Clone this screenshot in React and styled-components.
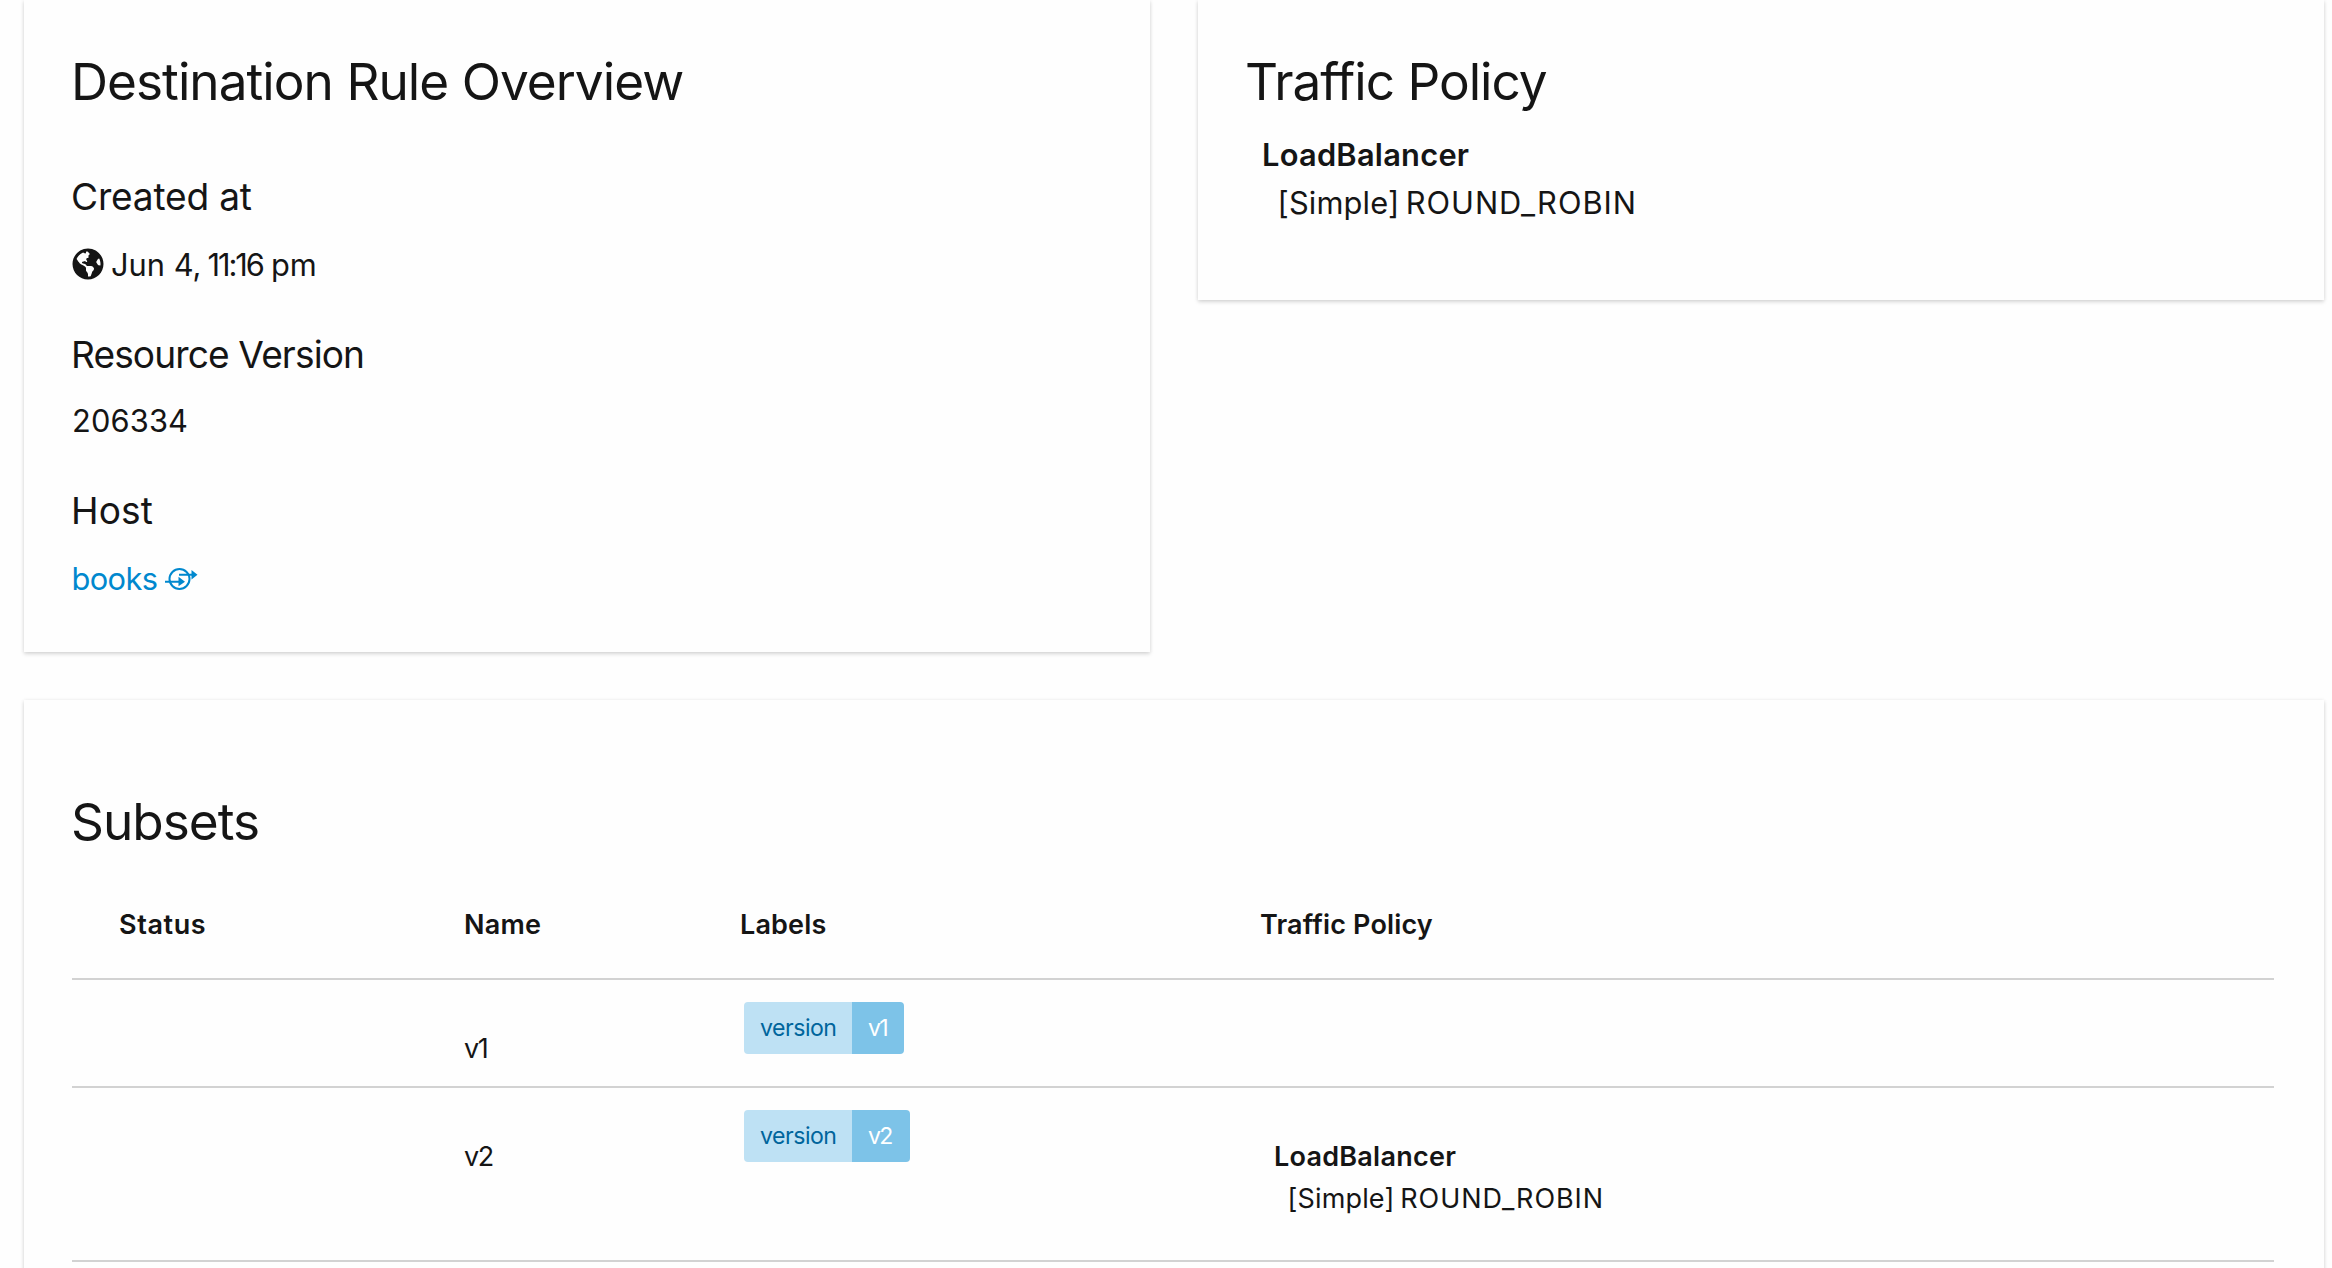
import React from 'react';
import styled, { createGlobalStyle } from 'styled-components';
import { FaGlobeAmericas } from 'react-icons/fa';

const GlobalStyle = createGlobalStyle`
  * { box-sizing: border-box; }
  body {
    margin: 0;
    overflow: hidden;
    background: #fefefe;
    color: #151515;
    font-family: Inter, 'Open Sans', sans-serif;
    font-kerning: normal;
  }
  h1, h3 { margin: 0; font-weight: 400; }
`;

const Page = styled.main`
  display: flex;
  flex-direction: column;
  gap: 48px;
  width: 2332px;
  height: 1268px;
  padding: 0 8px 0 24px;
  overflow: hidden;
`;

const TopRow = styled.div`
  display: grid;
  grid-template-columns: 1fr 1fr;
  gap: 48px;
  align-items: start;
`;

const Card = styled.section`
  min-height: ${(p) => p.$height}px;
  padding: ${(p) => p.$top || 51}px 48px 0;
  background: #fefefe;
  box-shadow: 0 2px 4px rgba(3, 3, 3, 0.15), 0 0 4px rgba(3, 3, 3, 0.06);
`;

const Title = styled.h1`
  margin-left: -1px;
  font-size: 51.3px;
  line-height: 60px;
  letter-spacing: ${(p) => p.$track}px;
`;

const Details = styled.div`
  display: flex;
  flex-direction: column;
  gap: 46px;
  margin-top: 64px;
`;

const Detail = styled.div`
  display: flex;
  flex-direction: column;
  gap: 22px;
`;

const DetailTitle = styled.h3`
  margin-left: -1px;
  font-size: 37.1px;
  line-height: 44px;
  letter-spacing: ${(p) => p.$track}px;
`;

const DetailValue = styled.div`
  display: flex;
  align-items: flex-end;
  height: ${(p) => (p.$withIcon ? 46 : 44)}px;
  font-size: 30.8px;
  line-height: 44px;
  letter-spacing: ${(p) => p.$track || 0}px;
`;

const Globe = styled(FaGlobeAmericas)`
  width: 32px;
  height: 32px;
  margin: 0 7px 7px 0;
`;

const Time = styled.span`
  margin: 0 8px 0 6px;
  letter-spacing: -2px;
`;

const HostLink = styled.a`
  display: flex;
  align-items: flex-end;
  margin-left: -0.5px;
  color: #0088ce;
  text-decoration: none;
`;

const ServiceGlyph = styled.svg`
  width: 34px;
  height: 26px;
  margin: 0 0 9px 8px;
`;

const Policy = styled.div`
  padding-left: ${(p) => p.$indent}px;
  font-size: ${(p) => p.$size}px;
  line-height: ${(p) => p.$line}px;
`;

const PolicyName = styled.div`
  font-weight: 600;
  letter-spacing: 0.25px;
`;

const PolicyValue = styled.div`
  padding-left: ${(p) => p.$indent - 0.5}px;
  letter-spacing: 0.95px;
  word-spacing: -0.1em;
`;

const PolicyKind = styled.span`
  letter-spacing: 0.15px;
`;

const SidePolicy = styled.div`
  margin-top: 20px;
`;

const Table = styled.div`
  display: flex;
  flex-direction: column;
  margin-right: 2px;
`;

const Row = styled.div`
  display: grid;
  grid-template-columns: 345px 276px 520px 1fr;
  height: ${(p) => p.$height}px;
  padding-left: 47px;
  border-bottom: 2px solid #d2d2d2;
  font-size: 27px;
  line-height: 42px;
`;

const HeadCell = styled.div`
  padding-top: 53px;
  font-weight: 600;
  letter-spacing: ${(p) => p.$track}px;
`;

const Cell = styled.div`
  padding-top: 48px;
`;

const NameCell = styled(Cell)`
  letter-spacing: -1.5px;
`;

const LabelCell = styled.div`
  display: flex;
  align-items: flex-start;
  padding: 22px 0 0 4px;
`;

const Badge = styled.div`
  display: flex;
  height: 52px;
  overflow: hidden;
  border-radius: 4px;
  font-size: 23.1px;
  line-height: 52px;
`;

const BadgeKey = styled.span`
  width: 108px;
  padding-left: 16px;
  background: #bee1f4;
  color: #00659c;
  letter-spacing: -0.5px;
`;

const BadgeValue = styled.span`
  width: ${(p) => p.$width}px;
  padding-left: 16px;
  background: #7dc3e8;
  color: #fff;
  letter-spacing: -1.7px;
`;

function ServiceIcon() {
  return (
    <ServiceGlyph viewBox="0 0 34 26" fill="none" stroke="currentColor" strokeWidth="2">
      <circle cx="14.5" cy="13" r="10" />
      <path d="M0 15.7H15M14 8.7H28" />
      <path d="M13.5 10.7v9.6l6.5-4.6zM26.5 4v9.4l6-4.7z" fill="currentColor" stroke="none" />
    </ServiceGlyph>
  );
}

function LoadBalancer({ size, line, indent }) {
  return (
    <Policy $size={size} $line={line} $indent={indent}>
      <PolicyName>LoadBalancer</PolicyName>
      <PolicyValue $indent={indent}>
        <PolicyKind>[Simple]</PolicyKind> ROUND_ROBIN
      </PolicyValue>
    </Policy>
  );
}

const columns = [
  { name: 'Status', track: 0.6 },
  { name: 'Name', track: 0.26 },
  { name: 'Labels', track: 0.15 },
  { name: 'Traffic Policy', track: 0.15 },
];

const subsets = [
  { name: 'v1', height: 108, valueWidth: 52, balanced: false },
  { name: 'v2', height: 174, valueWidth: 58, balanced: true },
];

export default function App() {
  return (
    <Page>
      <GlobalStyle />
      <TopRow>
        <Card $height={652}>
          <Title $track={-0.97}>Destination Rule Overview</Title>
          <Details>
            <Detail>
              <DetailTitle $track={-0.2}>Created at</DetailTitle>
              <DetailValue $withIcon>
                <Globe />
                <span>Jun 4,</span>
                <Time>11:16</Time>
                <span>pm</span>
              </DetailValue>
            </Detail>
            <Detail>
              <DetailTitle $track={-0.88}>Resource Version</DetailTitle>
              <DetailValue $track={0.15}>206334</DetailValue>
            </Detail>
            <Detail>
              <DetailTitle $track={0.1}>Host</DetailTitle>
              <DetailValue $withIcon $track={-0.6}>
                <HostLink>
                  books
                  <ServiceIcon />
                </HostLink>
              </DetailValue>
            </Detail>
          </Details>
        </Card>
        <Card $height={300}>
          <Title $track={-1}>Traffic Policy</Title>
          <SidePolicy>
            <LoadBalancer size={30.8} line={48} indent={16} />
          </SidePolicy>
        </Card>
      </TopRow>
      <Card $height={600} $top={91}>
        <Title $track={-0.99}>Subsets</Title>
        <Table>
          <Row $height={129}>
            {columns.map((c) => (
              <HeadCell key={c.name} $track={c.track}>{c.name}</HeadCell>
            ))}
          </Row>
          {subsets.map((s) => (
            <Row key={s.name} $height={s.height}>
              <Cell />
              <NameCell>{s.name}</NameCell>
              <LabelCell>
                <Badge>
                  <BadgeKey>version</BadgeKey>
                  <BadgeValue $width={s.valueWidth}>{s.name}</BadgeValue>
                </Badge>
              </LabelCell>
              <Cell>{s.balanced && <LoadBalancer size={27} line={42} indent={14} />}</Cell>
            </Row>
          ))}
        </Table>
      </Card>
    </Page>
  );
}
